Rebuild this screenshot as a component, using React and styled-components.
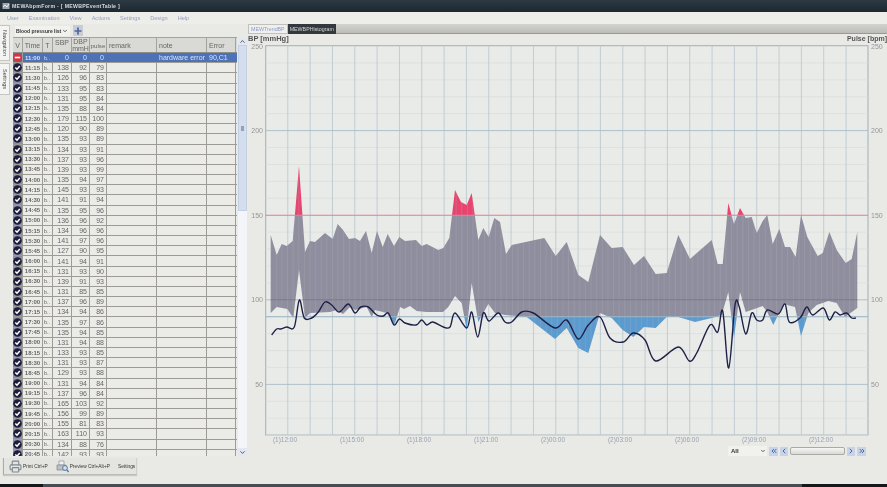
import React from 'react'
import styled, { createGlobalStyle } from 'styled-components'
import { Printer, ChevronDown, ChevronUp, ChevronLeft, ChevronRight, ChevronsLeft, ChevronsRight, Plus } from 'lucide-react'

const GlobalStyle = createGlobalStyle`
    html, body { margin: 0; padding: 0; background: #e9e9e6; }
    * { box-sizing: border-box; }
    body { font-family: "Liberation Sans", Arial, sans-serif; }
`

const Window = styled.div`
    width: 887px;
    height: 487px;
    overflow: hidden;
    display: flex;
    flex-direction: column;
    background: #e9e9e6;
    color: #4a4a4a;
    filter: blur(0.3px);
`
const TitleBar = styled.div`
    height: 12px;
    display: flex;
    align-items: center;
    gap: 2px;
    padding-left: 2px;
    background: linear-gradient(#2c3a44, #1d2830);
    color: #d5dbe0;
    font-size: 5.2px;
    font-weight: bold;
    letter-spacing: 0.3px;
    white-space: nowrap;
`
const MenuBar = styled.div`
    height: 12px;
    display: flex;
    align-items: center;
    gap: 10px;
    padding-left: 7px;
    background: #ededea;
    color: #95a0bd;
    font-size: 5.6px;
`
const Body = styled.div`
    height: 460px;
    display: flex;
`
const LeftPane = styled.div`
    width: 248px;
    display: flex;
`
const SideTabs = styled.div`
    width: 13px;
    padding-top: 1px;
    display: flex;
    flex-direction: column;
    gap: 2px;
`
const SideTab = styled.div`
    height: ${p => p.$h}px;
    width: 10px;
    display: flex;
    align-items: center;
    justify-content: center;
    background: #f4f4f2;
    border: 1px solid #c5c5c2;
    border-left: 0;
    font-size: 5.5px;
    color: #444;
    white-space: nowrap;
    span { transform: rotate(90deg); }
`
const TableColumn = styled.div`
    width: 235px;
    display: flex;
    flex-direction: column;
`
const ListBar = styled.div`
    height: 13px;
    display: flex;
    align-items: center;
    gap: 3px;
    padding-left: 2px;
`
const ListSelect = styled.div`
    width: 55px;
    height: 10px;
    display: flex;
    align-items: center;
    justify-content: space-between;
    padding: 0 2px 0 1px;
    font-size: 5px;
    font-weight: bold;
    white-space: nowrap;
    color: #333;
    background: #f1f1ee;
`
const AddButton = styled.div`
    width: 10px;
    height: 11px;
    display: flex;
    align-items: center;
    justify-content: center;
    background: #c9ccd2;
    color: #4a68a4;
`
const TableArea = styled.div`
    height: 419px;
    display: flex;
`
const Table = styled.div`
    width: 224px;
    height: 100%;
    overflow: hidden;
    background: #ebebe7;
    border-top: 1px solid #a3a39e;
`
const columns = '10px 20px 10px 19px 18px 17px 50px 50px 29px'
const HeadRow = styled.div`
    display: grid;
    grid-template-columns: ${columns};
    height: 15px;
    background: #d9d9d5;
    border-bottom: 1px solid #8f8f8a;
`
const HeadCell = styled.div`
    display: flex;
    align-items: ${p => p.$top ? 'flex-start' : 'center'};
    justify-content: ${p => p.$left ? 'flex-start' : 'center'};
    padding-left: ${p => p.$left ? '2px' : '0'};
    padding-top: ${p => p.$top ? '1px' : '0'};
    border-right: 1px solid #a3a39e;
    font-size: ${p => p.$small ? '6.2px' : '7px'};
    line-height: 7px;
    text-align: center;
    color: #666;
    overflow: hidden;
`
const Row = styled.div`
    display: grid;
    grid-template-columns: ${columns};
    height: 10.18px;
    background: ${p => p.$selected ? '#4d72b8' : '#ebebe7'};
    color: ${p => p.$selected ? '#d8e2f4' : '#666'};
    border-bottom: 1px solid #9c9c94;
`
const Cell = styled.div`
    display: flex;
    align-items: center;
    justify-content: ${p => p.$left ? 'flex-start' : p.$center ? 'center' : 'flex-end'};
    padding: 0 ${p => p.$center ? '0' : '2px'};
    border-right: 1px solid ${p => p.$selected ? '#4d72b8' : '#9c9c94'};
    font-size: ${p => p.$small ? '6px' : '7px'};
    font-weight: ${p => p.$bold ? 'bold' : 'normal'};
    white-space: nowrap;
    overflow: hidden;
`
const TypeCell = styled.div`
    display: flex;
    align-items: center;
    padding-left: 1px;
    border-right: 1px solid ${p => p.$selected ? '#4d72b8' : '#9c9c94'};
    font-size: 5.5px;
    white-space: nowrap;
`
const MarkCell = styled.div`
    display: flex;
    align-items: center;
    justify-content: center;
    background: ${p => p.$selected ? '#4d72b8' : '#8d8ea6'};
    border-right: 1px solid #9c9c94;
`
const ScrollBar = styled.div`
    width: 9px;
    margin-left: 1px;
    display: flex;
    flex-direction: column;
    background: #f3f5f8;
`
const ScrollEnd = styled.div`
    height: 8px;
    display: flex;
    align-items: center;
    justify-content: center;
    background: #e2e7f0;
    color: #445;
`
const ScrollThumb = styled.div`
    height: 166px;
    display: flex;
    align-items: center;
    justify-content: center;
    background: #d4deee;
    border: 1px solid #c3cfe2;
    &::after { content: ""; width: 3px; height: 5px; background: #8fa2bf; }
`
const ScrollRest = styled.div`
    flex: 1;
`
const PrintBar = styled.div`
    height: 17px;
    width: 134px;
    margin: 2px 0 0 -10px;
    display: flex;
    align-items: center;
    gap: 8px;
    padding-left: 5px;
    background: #e4e4e1;
    border-left: 1px solid #aaa;
    border-bottom: 1px solid #bcbcb8;
    border-right: 1px solid #cfcfcc;
    box-shadow: 0 1px 1px #c8c8c5;
    font-size: 4.8px;
    color: #333;
    white-space: nowrap;
`
const PrintItem = styled.div`
    display: flex;
    align-items: center;
    gap: 1px;
    svg { color: #7d8892; }
`
const RightPane = styled.div`
    flex: 1;
    display: flex;
    flex-direction: column;
`
const TabStrip = styled.div`
    height: 10px;
    display: flex;
    background: linear-gradient(#d2d2cf, #bcbcb9);
    border-bottom: 1px solid #98989a;
`
const ChartTab = styled.div`
    height: 10px;
    padding: 0 2px;
    display: flex;
    align-items: center;
    font-size: 5.3px;
    white-space: nowrap;
    background: ${p => p.$active ? '#efefed' : '#33383c'};
    color: ${p => p.$active ? '#8f9cc6' : '#d6d8da'};
    border: ${p => p.$active ? '1px solid #c0c0bc' : '0'};
`
const ChartSvg = styled.svg`
    display: block;
    width: 639px;
    height: 411px;
    font-family: "Liberation Sans", Arial, sans-serif;
`
const Navigator = styled.div`
    height: 10px;
    margin-top: 1px;
    display: flex;
    align-items: center;
    justify-content: flex-end;
    gap: 2px;
    padding-right: 21px;
`
const RangeSelect = styled.div`
    width: 39px;
    height: 10px;
    display: flex;
    align-items: center;
    justify-content: space-between;
    padding: 0 1px 0 3px;
    font-size: 6px;
    font-weight: bold;
    color: #333;
    background: #f1f1ee;
`
const NavButton = styled.div`
    width: ${p => p.$w || 8}px;
    height: 9px;
    display: flex;
    align-items: center;
    justify-content: center;
    background: #c8d3e8;
    color: #4568a8;
`
const NavTrack = styled.div`
    width: 55px;
    height: 8px;
    background: linear-gradient(#f6f6f4, #d8d8d5);
    border: 1px solid #a9a9a6;
    border-radius: 2px;
`
const StatusBar = styled.div`
    height: 3px;
    margin-top: auto;
    display: flex;
    background: #454e55;
`
const StatusEnd = styled.div`
    width: ${p => p.$w}px;
    margin-left: ${p => p.$push ? 'auto' : '0'};
    background: #14181b;
`

const rows = [
    ['11:15',138,92,79],['11:30',126,96,83],['11:45',133,95,83],['12:00',131,95,84],['12:15',135,88,84],
    ['12:30',179,115,100],['12:45',120,90,89],['13:00',135,93,89],['13:15',134,93,91],['13:30',137,93,96],
    ['13:45',139,93,99],['14:00',135,94,97],['14:15',145,93,93],['14:30',141,91,94],['14:45',135,95,96],
    ['15:00',136,96,92],['15:15',134,96,96],['15:30',141,97,96],['15:45',127,90,95],['16:00',141,94,91],
    ['16:15',131,93,90],['16:30',139,91,93],['16:45',131,85,85],['17:00',137,96,89],['17:15',134,94,86],
    ['17:30',135,97,86],['17:45',135,94,85],['18:00',131,94,88],['18:15',133,93,85],['18:30',131,93,87],
    ['18:45',129,93,88],['19:00',131,94,84],['19:15',137,96,84],['19:30',165,103,92],['19:45',156,99,89],
    ['20:00',155,81,83],['20:15',163,110,93],['20:30',134,88,76],['20:45',142,93,93],
]

// chart traces, in page pixels
const upper = [[270.7,235],[276.7,255],[281.7,244],[286.7,246],[292.7,241],[299,166],[305,252],[310,241],[315,242],[325,233],[332.7,239],[337.7,224],[343,230],[349,239],[355,238],[360,241],[366,231],[371.7,253],[377,231],[382.7,247],[387.7,234],[394,246],[399.3,237],[405,241],[416,240],[421.7,246],[426.7,244],[438.3,250],[443.3,248],[449.3,238],[455,190],[461,202],[466.7,205],[471.7,193],[478.3,240],[483.3,228],[488.7,237],[494.3,218],[500,222],[506,254],[511.7,245],[544.3,238],[555.7,256],[566.7,242],[578.3,275],[588.3,282],[600,235],[611.7,248],[622.7,247],[634,265],[644,256],[655.7,274],[666.7,273],[678.3,235],[690,259],[711.7,240],[717.7,264],[722.7,264],[728.3,203],[734,224],[740,208],[745.7,218],[751.7,217],[756.7,233],[762.7,221],[767.3,215],[772.7,244],[779.3,229],[785,247],[790,247],[795.7,257],[801,215],[807.3,237],[817.7,256],[822.7,253],[829.3,232],[836.7,250],[845.7,263],[851.7,259],[857.3,232]]
const lower = [[270.7,313],[276.7,307],[287.3,309],[293.3,318],[299,270],[305,318],[310,313],[330,312],[336.7,310],[343,314],[350,307],[355,310],[366.7,307],[371.7,317],[375,310],[386.7,313],[394.3,325],[400,307],[404,309],[410,306],[416.7,311],[426.7,312],[443,312],[448.3,307],[455,296],[461.7,303],[466.7,330],[471.7,283],[478.3,322],[488.3,304],[495,313],[505,315],[518,316],[526.7,317],[555,339],[566.7,328],[578.3,348],[588.3,353],[600,313],[611.7,318],[622.7,330],[633.3,337],[644,327],[655.7,328],[666.7,317],[678.3,317],[695,322],[711.7,318],[721.7,315],[728.3,292],[734,338],[740,292],[745.7,312],[762.7,306],[767.3,312],[773.3,325],[783.3,304],[795,307],[801,336],[808.3,313],[816.7,305],[828.3,301],[836.7,303],[845,317],[857.3,308]]
const pulse = [[271.7,335],[276.7,329],[281,329],[286.7,327],[294.3,327],[299.3,300],[304.3,318],[311.7,318],[318.3,312],[325,302],[331.7,305],[339.3,312],[348.3,304],[355,313],[360.7,307],[368.3,307],[376.7,315],[383.3,316],[388.3,313],[394,325],[399.3,319],[405,323],[416,325],[421.7,320],[426.7,325],[432.7,322],[443.3,327],[450,327],[455,313],[466.7,328],[471.7,312],[477.7,337],[483.3,313],[489,321],[498.3,313],[505,322],[511.7,322],[521.7,312],[533.3,313],[555,328],[566.7,320],[578.3,339],[588.3,325],[600,317],[610,338],[623.3,342],[633.3,333],[645,340],[655.7,361],[678.3,347],[689.3,361],[696.7,353],[710,325],[717.7,332],[722.7,311],[728.7,368],[735,305],[739.3,307],[745.7,334],[751.7,313],[756.7,320],[762.7,320],[767.3,310],[778.3,314],[785,304],[789.3,322],[800,318],[806.7,307],[812.7,315],[823.3,308],[829.3,320],[835,312],[840,315],[846.7,313],[851.7,318],[856,318]]

const bandPoints = [...upper, ...[...lower].reverse()].map(p => p.join(',')).join(' ')

const smoothPath = pts => {
    let d = `M${pts[0][0]} ${pts[0][1]}`
    for (let i = 0; i < pts.length - 1; i++) {
        const a = pts[i - 1] || pts[i], b = pts[i], c = pts[i + 1], e = pts[i + 2] || c
        const c1x = b[0] + (c[0] - a[0]) / 6, c1y = b[1] + (c[1] - a[1]) / 6
        const c2x = c[0] - (e[0] - b[0]) / 6, c2y = c[1] - (e[1] - b[1]) / 6
        d += ` C${c1x} ${c1y} ${c2x} ${c2y} ${c[0]} ${c[1]}`
    }
    return d
}

const PLOT = { left: 265.7, right: 868, top: 45.7, bottom: 435 }
const yOf = v => 384.4 - (v - 50) * 1.692
const verticals = Array.from({ length: 27 }, (_, i) => 287.8 + 22.33 * i).filter(x => x < PLOT.right)
const minorTicks = Array.from({ length: 25 }, (_, i) => 10 + i * 10).filter(v => v % 50 !== 0)
const stripes = Array.from({ length: 106 }, (_, i) => 270.7 + 5.62 * i)
const timeLabels = ['(1)12:00','(1)15:00','(1)18:00','(1)21:00','(2)00:00','(2)03:00','(2)06:00','(2)09:00','(2)12:00']

const OkMark = () => (
    <svg width="9" height="9" viewBox="0 0 9 9">
        <circle cx="4.5" cy="4.5" r="4.3" fill="#1c1c3c" />
        <path d="M2.3 4.5 L4 6.2 L6.8 2.9" fill="none" stroke="#fff" strokeWidth="1.5" />
    </svg>
)
const ErrorMark = () => (
    <svg width="9" height="9" viewBox="0 0 9 9">
        <circle cx="4.5" cy="4.5" r="4.3" fill="#d8343f" />
        <rect x="1.8" y="3.7" width="5.4" height="1.6" fill="#fff" />
    </svg>
)
const PreviewIcon = () => (
    <svg width="13" height="13" viewBox="0 0 13 13">
        <path d="M3 1 H8 V5 H3 Z" fill="#f2f2f0" stroke="#8a949c" strokeWidth="0.7" />
        <path d="M1 5 H10 V10 H1 Z" fill="#b9c0c6" stroke="#7d8892" strokeWidth="0.7" />
        <circle cx="9" cy="8" r="2.4" fill="#cfe0ee" stroke="#4f6f96" strokeWidth="0.9" />
        <path d="M10.8 9.8 L12.6 12" stroke="#4f6f96" strokeWidth="1.2" />
    </svg>
)

const Chart = () => (
    <ChartSvg viewBox="248 34 639 411">
        <defs>
            <clipPath id="above"><rect x="248" y="34" width="639" height={yOf(150) - 34} /></clipPath>
            <clipPath id="middle"><rect x="248" y={yOf(150)} width="639" height={yOf(90) - yOf(150)} /></clipPath>
            <clipPath id="below"><rect x="248" y={yOf(90)} width="639" height="100" /></clipPath>
            <clipPath id="band"><polygon points={bandPoints} /></clipPath>
        </defs>
        <rect x={PLOT.left} y={PLOT.top} width={PLOT.right - PLOT.left} height={PLOT.bottom - PLOT.top} fill="#e9ebe8" stroke="#9fb0ba" />
        {minorTicks.map(v => <line key={v} x1={PLOT.left} x2={PLOT.right} y1={yOf(v)} y2={yOf(v)} stroke="#dcdeda" strokeWidth="0.8" />)}
        {verticals.map(x => <line key={x} x1={x} x2={x} y1={PLOT.top} y2={PLOT.bottom} stroke="#bccad0" strokeWidth="0.9" />)}
        {[200, 100, 50].map(v => <line key={v} x1={PLOT.left} x2={PLOT.right} y1={yOf(v)} y2={yOf(v)} stroke="#a9bbc6" strokeWidth="0.9" />)}

        <polygon points={bandPoints} fill="#e8446f" clipPath="url(#above)" />
        <polygon points={bandPoints} fill="#8f8e9f" clipPath="url(#middle)" />
        <polygon points={bandPoints} fill="#5c9bd0" clipPath="url(#below)" />
        <g clipPath="url(#band)">
            {stripes.map(x => <line key={x} x1={x} x2={x} y1="160" y2="360" stroke="#b3b0b4" strokeWidth="0.7" opacity="0.4" />)}
            <line x1={PLOT.left} x2={PLOT.right} y1={yOf(100)} y2={yOf(100)} stroke="#78788a" strokeWidth="0.9" />
        </g>

        <line x1={PLOT.left} x2={PLOT.right} y1={yOf(150)} y2={yOf(150)} stroke="#e27b93" strokeWidth="1.1" />
        <line x1={PLOT.left} x2={PLOT.right} y1={yOf(90)} y2={yOf(90)} stroke="#98b4c4" strokeWidth="1" />
        <path d={smoothPath(pulse)} fill="none" stroke="#1e2048" strokeWidth="1.4" strokeLinejoin="round" />

        <text x="248" y="41" fontSize="7.5" fontWeight="bold" fill="#555">BP [mmHg]</text>
        <text x="887" y="41" fontSize="7" fontWeight="bold" fill="#555" textAnchor="end">Pulse [bpm]</text>
        {[250, 200, 150, 100, 50].map(v => (
            <g key={v} fontSize="7" fill="#959595">
                <text x="263" y={yOf(v) + 2.5} textAnchor="end">{v}</text>
                <text x="871" y={yOf(v) + 2.5}>{v}</text>
            </g>
        ))}
        {timeLabels.map((t, i) => (
            <text key={t} x={285 + 67 * i} y="441.5" fontSize="6.5" fill="#98a2b4" textAnchor="middle">{t}</text>
        ))}
    </ChartSvg>
)

const App = () => (
    <Window>
        <GlobalStyle />
        <TitleBar>
            <svg width="8" height="8" viewBox="0 0 8 8">
                <rect x="0.5" y="1" width="7" height="6" fill="#9aa8b4" />
                <path d="M1 5 L3 3 L5 5 L7 2" fill="none" stroke="#fff" strokeWidth="0.8" />
            </svg>
            <span>MEWAbpmForm - [ MEWBPEventTable ]</span>
        </TitleBar>
        <MenuBar>
            {['User', 'Examination', 'View', 'Actions', 'Settings', 'Design', 'Help'].map(m => <span key={m}>{m}</span>)}
        </MenuBar>
        <Body>
            <LeftPane>
                <SideTabs>
                    <SideTab $h={36}><span>Navigation</span></SideTab>
                    <SideTab $h={32}><span>Settings</span></SideTab>
                </SideTabs>
                <TableColumn>
                    <ListBar>
                        <ListSelect>Blood pressure list<ChevronDown size={6} strokeWidth={3} /></ListSelect>
                        <AddButton><Plus size={10} strokeWidth={4} /></AddButton>
                    </ListBar>
                    <TableArea>
                        <Table>
                            <HeadRow>
                                <HeadCell>V</HeadCell>
                                <HeadCell>Time</HeadCell>
                                <HeadCell>T</HeadCell>
                                <HeadCell $top>SBP</HeadCell>
                                <HeadCell>DBP mmH</HeadCell>
                                <HeadCell $small>pulse</HeadCell>
                                <HeadCell $left>remark</HeadCell>
                                <HeadCell $left>note</HeadCell>
                                <HeadCell $left>Error</HeadCell>
                            </HeadRow>
                            <Row $selected>
                                <MarkCell $selected><ErrorMark /></MarkCell>
                                <Cell $selected $center $bold $small>11:00</Cell>
                                <TypeCell $selected>b..</TypeCell>
                                <Cell $selected>0</Cell>
                                <Cell $selected>0</Cell>
                                <Cell $selected>0</Cell>
                                <Cell $selected />
                                <Cell $selected $left>hardware error</Cell>
                                <Cell $selected $left>90,C1</Cell>
                            </Row>
                            {rows.map(([time, sbp, dbp, pulseValue]) => (
                                <Row key={time}>
                                    <MarkCell><OkMark /></MarkCell>
                                    <Cell $center $bold $small>{time}</Cell>
                                    <TypeCell>b..</TypeCell>
                                    <Cell>{sbp}</Cell>
                                    <Cell>{dbp}</Cell>
                                    <Cell>{pulseValue}</Cell>
                                    <Cell />
                                    <Cell />
                                    <Cell />
                                </Row>
                            ))}
                        </Table>
                        <ScrollBar>
                            <ScrollEnd><ChevronUp size={7} strokeWidth={3} /></ScrollEnd>
                            <ScrollThumb />
                            <ScrollRest />
                            <ScrollEnd><ChevronDown size={7} strokeWidth={3} /></ScrollEnd>
                        </ScrollBar>
                    </TableArea>
                    <PrintBar>
                        <PrintItem><Printer size={13} />Print Ctrl+P</PrintItem>
                        <PrintItem><PreviewIcon />Preview Ctrl+Alt+P</PrintItem>
                        <PrintItem>Settings</PrintItem>
                    </PrintBar>
                </TableColumn>
            </LeftPane>
            <RightPane>
                <TabStrip>
                    <ChartTab $active>MEWTrendBP</ChartTab>
                    <ChartTab>MEWBPHistogram</ChartTab>
                </TabStrip>
                <Chart />
                <Navigator>
                    <RangeSelect>All<ChevronDown size={6} strokeWidth={3} /></RangeSelect>
                    <NavButton $w={9}><ChevronsLeft size={8} strokeWidth={3} /></NavButton>
                    <NavButton><ChevronLeft size={8} strokeWidth={3} /></NavButton>
                    <NavTrack />
                    <NavButton><ChevronRight size={8} strokeWidth={3} /></NavButton>
                    <NavButton $w={9}><ChevronsRight size={8} strokeWidth={3} /></NavButton>
                </Navigator>
            </RightPane>
        </Body>
        <StatusBar>
            <StatusEnd $w={43} />
            <StatusEnd $w={85} $push />
        </StatusBar>
    </Window>
)

export default App
